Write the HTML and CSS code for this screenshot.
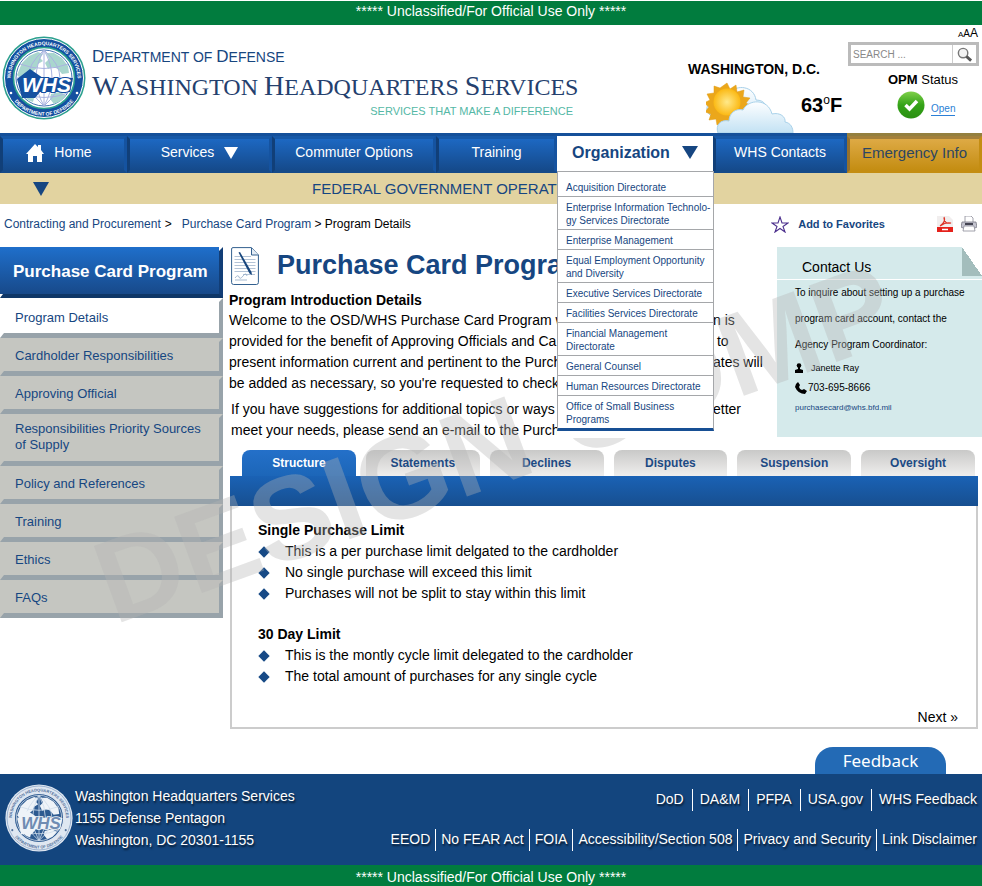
FILE: index.html
```html
<!DOCTYPE html>
<html lang="en">
<head>
<meta charset="utf-8">
<meta name="viewport" content="width=device-width, initial-scale=1">
<title>Purchase Card Program - Washington Headquarters Services</title>
<link rel="stylesheet" href="styles.css">
</head>
<body>
<svg class="defs" aria-hidden="true">
  <defs>
    <symbol id="seal" viewBox="0 0 84 84">
      <circle cx="42" cy="42" r="41.5" fill="var(--seal-rim)"/>
      <circle cx="42" cy="42" r="39.5" fill="var(--seal-ring)" stroke="var(--seal-line)" stroke-width="1"/>
      <circle cx="42" cy="42" r="30.5" fill="var(--seal-globe)" stroke="var(--seal-rim)" stroke-width="1.6"/>
      <circle cx="42" cy="42" r="28" fill="var(--seal-globe)" stroke="var(--seal-mark)" stroke-width=".8"/>
      <path fill="var(--seal-land)" d="M20 27l7-7 9-4 5 2-3 4 3 3-5 3-2 5-6 4-3 5-6 1-4-4zM44 17l8 0 8 5 6 8 1 7-7 1-4-5-5-2-5 2-3-6 4-4zM20 56l8-2 5 4-2 8-5-2-6-6zM49 58l9-2 6 3-5 6-7 3-4-5z"/>
      <g fill="none" stroke="var(--seal-grid)" stroke-width="1">
        <path d="M42 14v56M14 42h56M18 28q24 9 48 0M18 57q24 9 48 0M42 14q-32 28 0 56M42 14q32 28 0 56M42 14q-16 28 0 56M42 14q16 28 0 56"/>
      </g>
      <path fill="var(--seal-mark)" d="M28 33l13 9h30l-3 14H38l-5 6H20l-5-19z"/>
      <text x="20" y="56" class="seal-mark">WHS</text>
      <path id="seal-top" d="M10.500 54A33.500 33.500 0 1 1 73.500 54" fill="none"/>
      <path id="seal-bottom" d="M8 58A37.500 37.500 0 0 0 76 58" fill="none"/>
      <text class="seal-text"><textPath href="#seal-top" startOffset="50%" text-anchor="middle">WASHINGTON HEADQUARTERS SERVICES</textPath></text>
      <text class="seal-text"><textPath href="#seal-bottom" startOffset="50%" text-anchor="middle">DEPARTMENT OF DEFENSE</textPath></text>
      <circle cx="9" cy="57" r="1.300" fill="var(--seal-ink)"/>
      <circle cx="75" cy="57" r="1.300" fill="var(--seal-ink)"/>
    </symbol>
    <linearGradient id="cloud" x1="0" y1="0" x2="0" y2="1"><stop offset="0" stop-color="#fdfeff"/><stop offset="1" stop-color="#c3e2f4"/></linearGradient>
    <radialGradient id="sun"><stop offset="0" stop-color="#ffe98a"/><stop offset="1" stop-color="#fbb914"/></radialGradient>
    <linearGradient id="ok" x1="0" y1="0" x2="0" y2="1"><stop offset="0" stop-color="#7fd04a"/><stop offset=".5" stop-color="#34a318"/><stop offset="1" stop-color="#2a8f12"/></linearGradient>
  </defs>
</svg>

<div class="page">
  <p class="classification">***** Unclassified/For Official Use Only *****</p>

  <header class="masthead">
    <svg class="seal" role="img" aria-label="WHS seal"><use href="#seal"/></svg>
    <div class="brand">
      <p class="department">D<span>EPARTMENT OF </span>D<span>EFENSE</span></p>
      <p class="agency">W<span>ASHINGTON </span>H<span>EADQUARTERS </span>S<span>ERVICES</span></p>
      <p class="motto">SERVICES THAT MAKE A DIFFERENCE</p>
    </div>
    <div class="weather">
      <p class="city">WASHINGTON, D.C.</p>
      <div class="conditions">
        <svg class="sky" viewBox="0 0 90 51" aria-hidden="true">
          <path d="M4 33c-5-4-4-11 2-12 2-9 10-12 17-10 8-9 25-7 27 7 9 0 12 7 11 13L40 44 14 38z" fill="url(#cloud)" stroke="#a6cfe8" stroke-width="1"/>
          <path fill="#eba71b" stroke="#e09a12" stroke-width=".5" d="M21 1l3 6 6-4 1 7 7-2-1 7 7 1-4 5 6 3-6 4 4 5-7 1 1 7-7-2-2 6-5-4-4 5-3-6-6 3-1-6-7 1 2-6-6-2 4-5-5-4 6-3-3-6 7-1 0-7 6 2z"/>
          <circle cx="21" cy="20" r="13.500" fill="url(#sun)"/>
          <path d="M12 51c-3-8 3-14 11-12 0-8 7-13 14-11 5-11 25-12 29 4 8-2 14 3 13 8 6 1 8 6 8 11z" fill="url(#cloud)" stroke="#a9d2ea" stroke-width="1"/>
        </svg>
        <span class="degrees">63<sup>o</sup>F</span>
      </div>
    </div>
    <div class="tools">
      <div class="text-size"><button type="button" aria-label="Small text">A</button><button type="button" aria-label="Medium text">A</button><button type="button" aria-label="Large text">A</button></div>
      <form class="search">
        <input type="text" aria-label="Search" placeholder="SEARCH ...">
        <button type="button" aria-label="Run search"><svg viewBox="0 0 18 18"><circle cx="7.500" cy="7.500" r="5" fill="#f2f2f2" stroke="#777" stroke-width="1.500"/><path d="M11 11l5 4.500" stroke="#555" stroke-width="3"/></svg></button>
      </form>
      <div class="opm">
        <p>OPM <span>Status</span></p>
        <div class="opm-state">
          <svg viewBox="0 0 28 28" aria-hidden="true"><circle cx="14" cy="14" r="13.500" fill="url(#ok)"/><path d="M8.500 14l4 4 7.500-8" fill="none" stroke="#fff" stroke-width="3.500"/></svg>
          <a href="#">Open</a>
        </div>
      </div>
    </div>
  </header>

  <nav aria-label="Main">
    <ul class="menu">
      <li class="start"><a href="#"><svg class="home" viewBox="0 0 18 18" aria-hidden="true"><path fill="#fff" d="M9 0l3 3V1h3v5l3 4h-2v8h-5v-6H7v6H2v-8H0z"/></svg>Home</a></li>
      <li><a href="#">Services <i class="arrow"></i></a></li>
      <li><a href="#">Commuter Options</a></li>
      <li><a href="#">Training</a></li>
      <li class="open"><a href="#">Organization <i class="arrow"></i></a>
        <ul class="submenu">
          <li><a href="#">Acquisition Directorate</a></li>
          <li><a href="#">Enterprise Information Technolo-<br>gy Services Directorate</a></li>
          <li><a href="#">Enterprise Management</a></li>
          <li><a href="#">Equal Employment Opportunity<br>and Diversity</a></li>
          <li><a href="#">Executive Services Directorate</a></li>
          <li><a href="#">Facilities Services Directorate</a></li>
          <li><a href="#">Financial Management<br>Directorate</a></li>
          <li><a href="#">General Counsel</a></li>
          <li><a href="#">Human Resources Directorate</a></li>
          <li><a href="#">Office of Small Business<br>Programs</a></li>
        </ul>
      </li>
      <li><a href="#">WHS Contacts</a></li>
      <li class="emergency"><a href="#">Emergency Info</a></li>
    </ul>
  </nav>

  <div class="ticker"><i class="arrow"></i><p>FEDERAL GOVERNMENT OPERATI</p></div>

  <div class="crumb-row">
    <p class="crumbs"><a href="#">Contracting and Procurement</a><span class="wide">&gt;</span><a href="#">Purchase Card Program</a> &gt; Program Details</p>
    <a class="favorite" href="#"><svg viewBox="0 0 18 17" aria-hidden="true"><path d="M9 1l2 6h6l-5 3.500 2 5.500-5-3.500L4 16l2-5.500L1 7h6z" fill="#fff" stroke="#4b2e8c" stroke-width="1.100"/></svg>Add to Favorites</a>
    <div class="exports">
      <a href="#" aria-label="PDF"><svg viewBox="0 0 16 16"><path d="M0 0h12l4 4v12H0z" fill="#f1eeee"/><path d="M0 11h16v5H0z" fill="#e5211b"/><path d="M7 1c2 4-1 7-4 9M7 2c0 4 3 6 7 5-4-1-8 1-11 3" fill="none" stroke="#dd3328" stroke-width="1.200"/><path d="M5 13.500h6" stroke="#fff" stroke-width="1.500"/></svg></a>
      <a href="#" aria-label="Print"><svg viewBox="0 0 16 16"><path d="M4 0h6l2 2v5H4z" fill="#fff" stroke="#8c8c98" stroke-width=".8"/><path d="M1 6h14l1 5-2 1H2l-2-1z" fill="#c4c4cf" stroke="#777783" stroke-width=".8"/><path d="M4 7h8v2H4z" fill="#444452"/><path d="M3 10h10l1 5H2z" fill="#fff" stroke="#8c8c98" stroke-width=".8"/></svg></a>
    </div>
  </div>

  <div class="columns">
    <nav class="side" aria-label="Purchase Card Program">
      <h2>Purchase Card Program</h2>
      <ul>
        <li class="current"><a href="#">Program Details</a></li>
        <li><a href="#">Cardholder Responsibilities</a></li>
        <li><a href="#">Approving Official</a></li>
        <li><a href="#">Responsibilities Priority Sources of Supply</a></li>
        <li><a href="#">Policy and References</a></li>
        <li><a href="#">Training</a></li>
        <li><a href="#">Ethics</a></li>
        <li><a href="#">FAQs</a></li>
      </ul>
    </nav>

    <main>
      <div class="intro">
        <article>
          <div class="title">
            <svg viewBox="0 0 28 38" aria-hidden="true"><path d="M2 .600h18.500L27.400 8v27.500q0 2-2 2H2.600q-2 0-2-2V2q0-1.400 1.400-1.400z" fill="#fff" stroke="#33608f"/><path d="M20.500 1v7h7" fill="#e3ecf5" stroke="#33608f"/><path d="M3.500 9.500H20M3.500 12.500h21M3.500 15.500h21M3.500 18.500h21M3.500 21.500h21M3.500 24.500h21M12 27.500h12" stroke="#b3c3d6"/><path d="M7.500 5.500L9 5l11.500 20 .500 3-2.500-1.500z" fill="#17457c"/><path d="M4 31q3-4 4-1t4-1 4 0M4 33h12" fill="none" stroke="#8fa8c4" stroke-width=".8"/></svg>
            <h1>Purchase Card Progra</h1>
          </div>
          <h2>Program Introduction Details</h2>
          <p class="split"><span>Welcome to the OSD/WHS Purchase Card Program w</span><span>n is</span>
            <span>provided for the benefit of Approving Officials and Ca</span><span>&nbsp;to</span>
            <span>present information current and pertinent to the Purch</span><span>ates will</span>
            <span>be added as necessary, so you're requested to check</span></p>
          <p class="split note"><span>If you have suggestions for additional topics or ways</span><span>etter</span>
            <span>meet your needs, please send an e-mail to the Purch</span></p>
        </article>
        <aside>
          <h2>Contact Us</h2>
          <p>To inquire about setting up a purchase<br>program card account, contact the<br>Agency Program Coordinator:</p>
          <ul>
            <li><svg class="person" viewBox="0 0 8 10" aria-hidden="true"><circle cx="4" cy="2.500" r="2.300"/><path d="M3 4h2v2l3 1v3H0V7l3-1z"/></svg>Janette Ray</li>
            <li class="phone"><svg viewBox="0 0 12 12" aria-hidden="true"><path d="M1 2l2-2 2 3-1 2q1 3 3 3l2-1 3 2-2 3Q3 12 0 5z"/></svg>703-695-8666</li>
            <li class="mail"><a href="#">purchasecard@whs.bfd.mil</a></li>
          </ul>
        </aside>
      </div>

      <div class="tabs" role="tablist">
        <button type="button" role="tab" aria-selected="true">Structure</button>
        <button type="button" role="tab">Statements</button>
        <button type="button" role="tab">Declines</button>
        <button type="button" role="tab">Disputes</button>
        <button type="button" role="tab">Suspension</button>
        <button type="button" role="tab">Oversight</button>
      </div>
      <section class="panel" role="tabpanel">
        <h3>Single Purchase Limit</h3>
        <ul>
          <li>This is a per purchase limit delgated to the cardholder</li>
          <li>No single purchase will exceed this limit</li>
          <li>Purchases will not be split to stay within this limit</li>
        </ul>
        <h3>30 Day Limit</h3>
        <ul>
          <li>This is the montly cycle limit delegated to the cardholder</li>
          <li>The total amount of purchases for any single cycle</li>
        </ul>
        <a class="next" href="#">Next »</a>
      </section>
    </main>
  </div>

  <div class="feedback-row"><a href="#">Feedback</a></div>
  <footer>
    <svg class="seal" role="img" aria-label="WHS seal"><use href="#seal"/></svg>
    <address>Washington Headquarters Services<br>1155 Defense Pentagon<br>Washington, DC 20301-1155</address>
    <div class="links">
      <ul>
        <li><a href="#">DoD</a></li><li><a href="#">DA&amp;M</a></li><li><a href="#">PFPA</a></li><li><a href="#">USA.gov</a></li><li><a href="#">WHS Feedback</a></li>
      </ul>
      <ul class="legal">
        <li><a href="#">EEOD</a></li><li><a href="#">No FEAR Act</a></li><li><a href="#">FOIA</a></li><li><a href="#">Accessibility/Section 508</a></li><li><a href="#">Privacy and Security</a></li><li><a href="#">Link Disclaimer</a></li>
      </ul>
    </div>
  </footer>
  <p class="classification bottom">***** Unclassified/For Official Use Only *****</p>
  <div class="watermark" aria-hidden="true">DESIGN COMP</div>
</div>
</body>
</html>
```
FILE: styles.css
```css
* { box-sizing: border-box; }
body {
  margin: 0;
  background: #fff;
  color: #000;
  font: 14px/21px "Liberation Sans", Arial, sans-serif;
}
p, h1, h2, h3, ul { margin: 0; padding: 0; }
ul { list-style: none; }
a { color: #164681; text-decoration: none; }
button { font: inherit; color: inherit; border: 0; padding: 0; background: none; cursor: pointer; }
svg { display: block; flex: none; }
.defs { position: absolute; width: 0; height: 0; }
.page { position: relative; overflow: hidden; padding-top: 1px; }

.classification {
  height: 24px;
  background: #017c3e;
  color: #fff;
  font-size: 14px;
  line-height: 20px;
  text-align: center;
}
.classification.bottom { height: 21px; line-height: 21px; padding-top: 2px; }

.arrow {
  display: inline-block;
  border: 7px solid transparent;
  border-top: 12px solid currentColor;
  border-bottom: 0;
}

/* masthead */
.masthead { display: flex; height: 108px; padding-right: 3px; }
.seal {
  --seal-rim: #2ba08e; --seal-ring: #1450a0; --seal-line: #fff; --seal-globe: #fff;
  --seal-land: #a9d6ce; --seal-grid: #a9b3e0; --seal-mark: #1450a0; --seal-ink: #fff; --seal-letter: #fff;
  width: 84px;
  height: 84px;
  margin: 11px 0 0 2px;
}
.seal-mark {
  font: italic bold 21px "Liberation Sans", sans-serif;
  fill: var(--seal-letter);
  stroke: var(--seal-mark);
  stroke-width: 2px;
  paint-order: stroke;
}
.seal-text { font: bold 5px "Liberation Sans", sans-serif; fill: var(--seal-ink); }
.brand { padding: 20px 0 0 6px; width: 487px; }
.department { font-size: 17px; line-height: 24px; color: #17467f; }
.department span { font-size: 14px; }
.agency { font: 28px/34px "Liberation Serif", serif; color: #24406e; white-space: nowrap; }
.agency span { font-size: 24px; }
.motto { font-size: 11px; line-height: 14px; color: #55b8a6; text-align: right; }
.weather { flex: 1; padding: 34px 0 0 115px; }
.city { font-weight: bold; font-size: 14px; line-height: 20px; white-space: nowrap; }
.conditions { display: flex; padding-left: 18px; gap: 5px; margin-top: 3px; }
.sky { width: 90px; height: 51px; }
.degrees { font-weight: bold; font-size: 20px; line-height: 46px; }
.degrees sup { font-size: 12px; line-height: 0; font-weight: normal; }
.tools { width: 131px; }
.text-size { display: flex; justify-content: flex-end; align-items: baseline; height: 17px; padding-right: 1px; line-height: 17px; }
.text-size button { font-size: 8px; }
.text-size button:nth-child(2) { font-size: 10px; }
.text-size button:nth-child(3) { font-size: 12px; }
.search { display: flex; height: 24px; border: 3px solid #bbb; }
.search input { flex: 1; min-width: 0; border: 0; border-right: 1px solid #ccc; padding: 0 2px; font: 10px "Liberation Sans", sans-serif; }
.search input::placeholder { color: #888; }
.search button { width: 23px; padding: 0 3px; }
.opm { padding: 4px 0 0 40px; font-weight: bold; font-size: 13px; line-height: 20px; }
.opm span { font-weight: normal; }
.opm-state { display: flex; gap: 6px; padding-left: 9px; }
.opm-state svg { width: 28px; height: 28px; margin-top: 1px; }
.opm-state a { font-size: 10px; font-weight: normal; line-height: 12px; align-self: center; margin-top: 10px; color: #2b7fd6; border-bottom: 1px solid; }

/* main navigation */
.menu { display: grid; grid-template-columns: 127fr 145fr 164fr 121fr 156fr 134fr 135fr; height: 40px; background: #15509a; padding-top: 3px; }
.menu > li { position: relative; background: linear-gradient(#1d68c2, #154a8b); border: 3px solid; border-color: #1759a8 #1553a0 #154a88 #113f78; }
.menu > li > a { display: flex; align-items: center; justify-content: center; gap: 10px; height: 27px; color: #fff; font-size: 14px; white-space: nowrap; }
.menu > .start > a { padding-right: 9px; }
.home { width: 18px; height: 18px; }
.menu > .open { background: #fff; border: 0; z-index: 3; }
.menu > .open > a { height: 33px; color: #164681; font-weight: bold; font-size: 16px; gap: 12px; }
.menu > .open .arrow { border-width: 13px 8px 0; }
.menu > .emergency { background: linear-gradient(#deaa45, #c48d12); border-color: #a4813b #c48d12 #c48d12 #94702c; box-shadow: 0 -3px #94803f; }
.menu > .emergency > a { color: #2c4663; font-size: 15px; }
.submenu {
  position: absolute;
  top: 35px;
  left: 0;
  right: -1px;
  padding-top: 5px;
  background: #fff;
  border: 1px solid #a5a7aa;
  border-bottom: 3px solid #174f94;
  box-shadow: 0 7px #fff;
}
.submenu li { padding: 4px 0 2px 8px; border-bottom: 1px solid #a5a7aa; white-space: nowrap; }
.submenu li:last-child { border: 0; }
.submenu a { display: block; font-size: 10px; line-height: 13px; }

.ticker { display: flex; height: 31px; padding-left: 33px; background: #e2d3a0; color: #164681; }
.ticker .arrow { border-width: 14px 8px 0; align-self: center; }
.ticker p { padding-left: 263px; font-size: 15px; line-height: 31px; white-space: nowrap; }

.crumb-row { display: flex; align-items: center; height: 43px; padding: 0 5px 3px 4px; font-size: 12px; }
.crumbs { flex: 1; }
.crumbs .wide { padding: 0 10px 0 4px; }
.favorite { display: flex; align-items: center; gap: 9px; font-size: 11px; font-weight: bold; padding-right: 52px; }
.favorite svg { width: 18px; height: 17px; }
.exports { display: flex; gap: 8px; }
.exports svg { width: 16px; height: 16px; }

/* side menu */
.columns { display: flex; gap: 6px; }
.side { width: 223px; flex: none; }
.side h2 {
  height: 51px;
  padding-left: 10px;
  background: linear-gradient(#1f6fcb, #174684);
  background-origin: border-box;
  border: 4px solid transparent;
  border-right-color: #123e77;
  border-bottom-color: #0f3767;
  border-left-width: 3px;
  color: #fff;
  font-size: 17px;
  line-height: 42px;
  white-space: nowrap;
}
.side li {
  padding: 3px 8px 4px 11px;
  background: #c5c6c1;
  border: 4px solid #c5c6c1;
  border-right-color: #98a3aa;
  border-bottom: 5px solid #98a3aa;
}
.side .current { background: #fff; border-color: #fff #98a3aa #98a3aa #fff; padding-top: 5px; }
.side a { display: block; font-size: 13px; line-height: 16px; padding: 3px 0; }
.side li:nth-child(4) { padding-top: 0; padding-bottom: 5px; }

/* article */
main { flex: 1; min-width: 0; }
.intro { display: flex; }
article { flex: 1; white-space: nowrap; min-width: 0; }
.title { display: flex; gap: 18px; padding-left: 2px; height: 43px; }
.title svg { width: 28px; height: 38px; }
h1 { color: #164681; font-size: 27px; line-height: 37px; }
article h2 { font-size: 14px; line-height: 20px; }
/* the open menu covers the band between the two columns */
.split { display: grid; grid-template-columns: 328px 1fr; column-gap: 156px; }
.note { padding: 5px 0 0 2px; grid-template-columns: 326px 1fr; }
aside { position: relative; width: 205px; height: 190px; flex: none; background: #d5eaeb; font-size: 10px; }
aside::after {
  content: "";
  position: absolute;
  top: 0;
  right: 0;
  width: 20px;
  height: 29px;
  background: linear-gradient(to top right, #a3bdbc 50%, #fff 50%);
}
aside h2 { height: 33px; padding-left: 25px; border-bottom: 1px solid #fff; font-weight: normal; font-size: 14px; line-height: 40px; }
aside p { padding-left: 18px; line-height: 26px; white-space: nowrap; }
aside ul { padding-left: 18px; line-height: 20px; }
aside li { display: flex; align-items: center; gap: 8px; height: 20px; font-size: 9px; }
aside .phone { gap: 1px; font-size: 10px; }
aside .mail { font-size: 8px; }
aside .person { width: 8px; height: 10px; }
aside .phone svg { width: 12px; height: 12px; }

/* tabs */
.tabs { display: grid; grid-template-columns: repeat(6, 1fr); gap: 10px; margin: 9px 7px 0 13px; }
.tabs button { height: 26px; border-radius: 8px 8px 0 0; background: linear-gradient(#c9c9c8, #efeeed); color: #1d4a84; font-size: 12px; font-weight: bold; line-height: 24px; }
.tabs button[aria-selected] { background: linear-gradient(#2470c9, #1c66b8); color: #fff; }
.panel { display: flex; flex-direction: column; height: 253px; margin: 0 4px 0 1px; padding: 0 18px 0 26px; border: 2px solid #ccc; border-top: 0; }
.panel::before { content: ""; height: 30px; flex: none; margin: 0 -20px 14px -28px; background: linear-gradient(#1a62b5, #174f90); }
.panel h3 { font-size: 14px; line-height: 21px; }
.panel ul { margin-bottom: 20px; }
.panel li { display: flex; align-items: center; gap: 17px; line-height: 21px; }
.panel li::before { content: ""; width: 8px; height: 8px; margin-left: 2px; background: #174a86; transform: rotate(45deg); }
.next { margin-top: auto; align-self: flex-end; color: #000; }

/* footer */
.feedback-row { display: flex; justify-content: flex-end; height: 45px; align-items: flex-end; padding-right: 36px; }
.feedback-row a { width: 131px; height: 27px; border-radius: 18px 18px 0 0; background: #236ab5; color: #fff; font: 17px/27px "Noto Sans", sans-serif; text-align: center; }
footer { display: flex; height: 91px; padding: 0 5px; background: #13457e; color: #fff; text-shadow: 1px 2px 2px #000a; }
footer .seal {
  --seal-rim: #dfe7f1; --seal-ring: #dfe7f1; --seal-line: #8fa8c8; --seal-globe: #2d5a90;
  --seal-land: #eef3f8; --seal-grid: #cfdcea; --seal-mark: #eef3f8; --seal-ink: #50709c; --seal-letter: #6f8cb3;
  width: 68px; height: 68px; margin: 10px 0 0; text-shadow: none;
}
address { flex: 1; padding: 11px 0 0 2px; font-style: normal; line-height: 22px; white-space: nowrap; }
.links { padding-top: 15px; }
.links ul { display: flex; justify-content: flex-end; height: 40px; }
.links li { padding: 0 0 0 7px; height: 22px; white-space: nowrap; }
.links li:not(:last-child) { padding-right: 8px; border-right: 1px solid #fff; }
.links .legal li { padding-left: 5px; }
.links .legal li:not(:last-child) { padding-right: 5px; }
.links a { color: #fff; }

.watermark {
  position: absolute;
  z-index: 2;
  left: 114px;
  top: 517px;
  font-size: 118px;
  font-weight: bold;
  line-height: 135px;
  white-space: nowrap;
  color: #b4b4b45c;
  transform: rotate(-20deg);
  transform-origin: 0 107px;
  pointer-events: none;
}
```
